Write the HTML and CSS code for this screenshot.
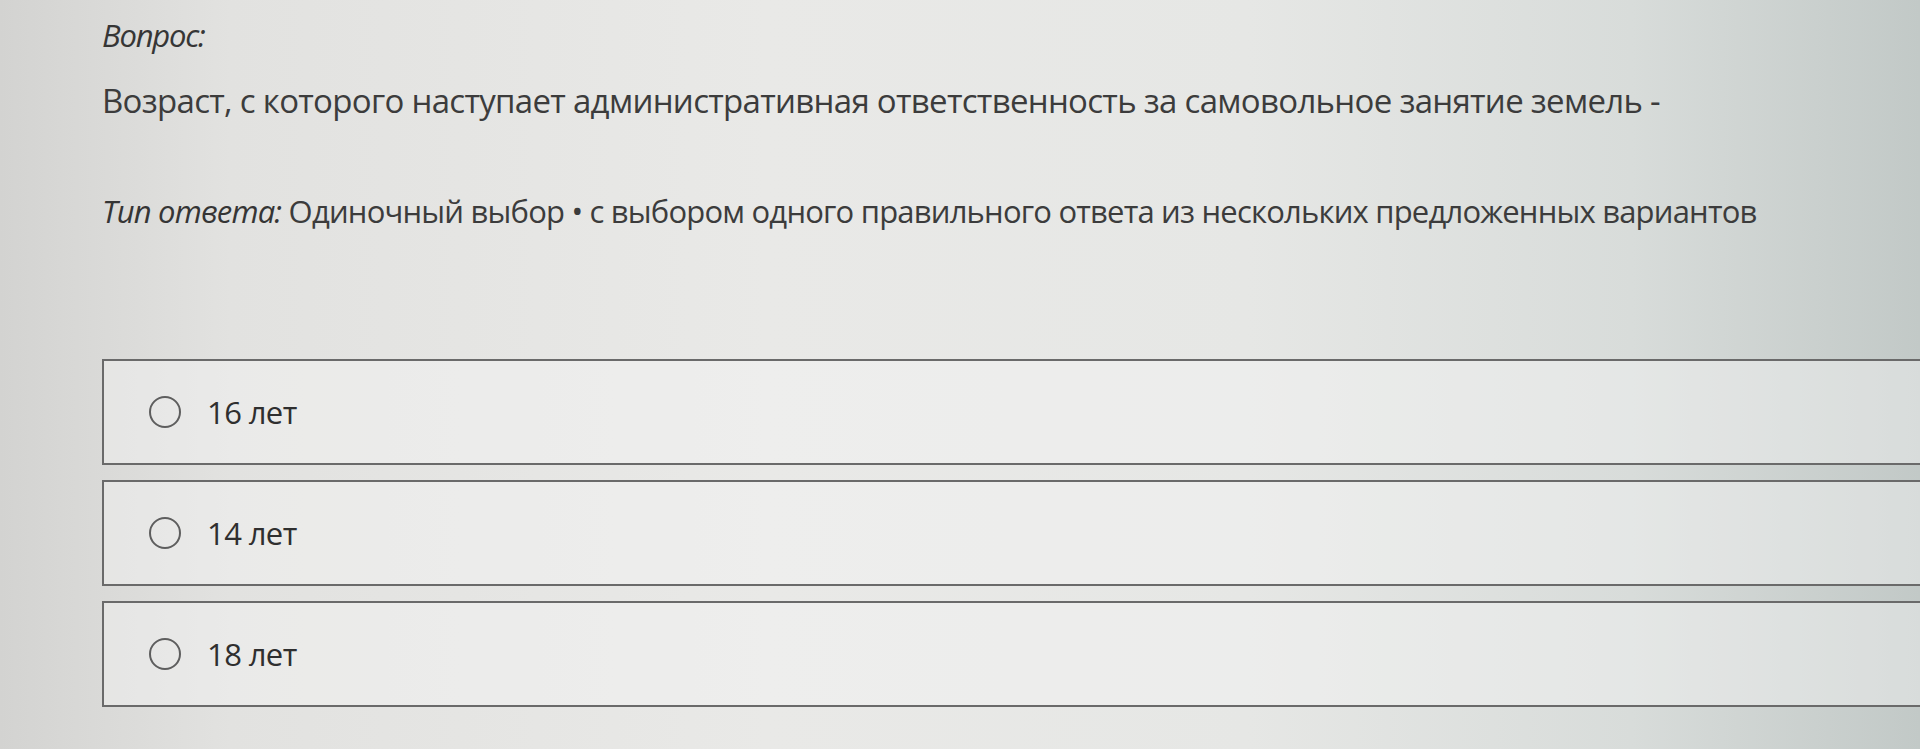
FILE: index.html
```html
<!DOCTYPE html>
<html lang="ru">
<head>
<meta charset="utf-8">
<title>Вопрос</title>
<link rel="stylesheet" href="styles.css">
</head>
<body>
<main class="page">
  <section class="question">
    <div class="label">Вопрос:</div>
    <p class="text">Возраст, с которого наступает административная ответственность за самовольное занятие земель -</p>
    <p class="type"><span class="type-label">Тип ответа:</span> Одиночный выбор • с выбором одного правильного ответа из нескольких предложенных вариантов</p>
  </section>
  <section class="options">
    <label class="option"><span class="radio"></span><span class="opt-text">16 лет</span></label>
    <label class="option"><span class="radio"></span><span class="opt-text">14 лет</span></label>
    <label class="option"><span class="radio"></span><span class="opt-text">18 лет</span></label>
  </section>
</main>
</body>
</html>
```
FILE: styles.css
```css
html, body {
  margin: 0;
  padding: 0;
  height: 100%;
}
body {
  background: linear-gradient(90deg, #d3d3d1 0%, #e2e2e0 12%, #e9e9e7 40%, #e6e7e5 65%, #d8dcda 85%, #c2c9c7 100%);
  font-family: "Open Sans", "Noto Sans", sans-serif;
  color: #3a3a3a;
  overflow: hidden;
}
.page {
  padding-left: 102px;
  padding-top: 15px;
}
.question {
  display: flex;
  flex-direction: column;
}
.label {
  font-style: italic;
  font-size: 31px;
  line-height: 40px;
  color: #363636;
  letter-spacing: -1.2px;
}
.text {
  margin: 26px 0 0 0;
  font-size: 33px;
  line-height: 40px;
  letter-spacing: -0.7px;
  color: #3c3c3c;
}
.type {
  margin: 70px 0 0 0;
  font-size: 31px;
  line-height: 40px;
  letter-spacing: -0.8px;
  color: #3c3c3c;
}
.type-label {
  font-style: italic;
  font-weight: 500;
  color: #353535;
}
.options {
  margin-top: 128px;
  display: flex;
  flex-direction: column;
  gap: 15px;
}
.option {
  display: flex;
  align-items: center;
  height: 106px;
  box-sizing: border-box;
  border: 2px solid #6a6a6a;
  border-right: none;
  background: rgba(245, 245, 243, 0.45);
  padding-left: 45px;
  gap: 26px;
}
.radio {
  width: 32px;
  height: 32px;
  border: 2px solid #5e5e5e;
  border-radius: 50%;
  box-sizing: border-box;
  flex: none;
}
.opt-text {
  font-size: 31px;
  letter-spacing: -0.6px;
  color: #2f2f2f;
}
```
